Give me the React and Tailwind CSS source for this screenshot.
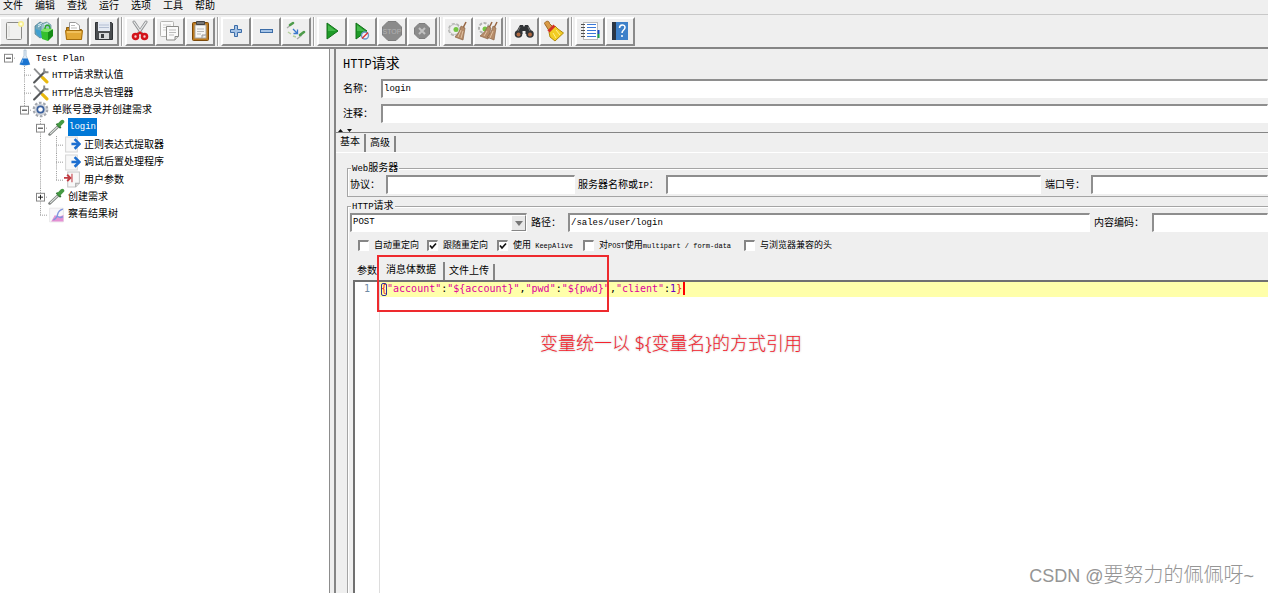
import React, { useState } from "react";

const MONO = "font-['Liberation_Mono','Noto_Sans_CJK_SC',monospace]";

/* Latin runs are set a little smaller than the Chinese glyphs beside them. */
function Mixed({ text, latin = "text-[9px]" }) {
  return text.split(/([\x20-\x7e]+)/).filter(Boolean).map((part, i) =>
    /^[\x20-\x7e]+$/.test(part) ? (
      <span key={i} className={latin}>{part}</span>
    ) : (
      <React.Fragment key={i}>{part}</React.Fragment>
    )
  );
}

/* ---------- toolbar icons (22 x 22) ---------- */
const page = { fill: "#fafafa", stroke: "#8b8b88", strokeWidth: 1 };
const ICONS = {
  new: (
    <>
      <rect x="3.5" y="2.5" width="15" height="17" rx="1" {...page} fill="#f1f1ef" />
      <path d="M6 6v11" stroke="#dcdcda" />
      <circle cx="18" cy="4" r="3" fill="#f7ee8e" />
      <circle cx="18" cy="4" r="1.5" fill="#fffde0" />
    </>
  ),
  templates: (
    <>
      <path d="M2 6l5-4 4 2v12l-4 2-5-4z" fill="#6fa8bd" stroke="#49798c" strokeWidth=".7" />
      <path d="M8 4l6-2 4 3v8H8z" fill="#9cc3cc" stroke="#5d8c98" strokeWidth=".7" />
      <path d="M5 5l4-2M11 5l4-2M5 7l3-2M11 7l4-2" stroke="#e5f4f7" />
      <path d="M2 9l4 1 4 2v7l-6-4z" fill="#3f9fd0" />
      <path d="M8 11l7 1v9l-6-2z" fill="#35c02c" />
      <path d="M15 12l5-3v7l-5 5z" fill="#168c17" />
      <path d="M8 11l3-3 9 1-5 3z" fill="#7ce85e" />
      <path d="M12 9c0-5 5-5 5 0" fill="none" stroke="#2ba527" strokeWidth="1.300" />
    </>
  ),
  open: (
    <>
      <path d="M3.500 19V7.500h5l2 2h8V19z" fill="#c98a1a" stroke="#8f5e0b" />
      <path d="M6.500 12V2.500h6l4 3V12z" fill="#fff" stroke="#999" />
      <path d="M8 5.500h4M8 8h6" stroke="#bbb" />
      <path d="M2.500 10.500h17l-1 9h-15z" fill="#e3a936" stroke="#a76f0d" />
      <path d="M4 12h14" stroke="#ffd986" />
    </>
  ),
  save: (
    <>
      <path d="M2.500 2.500h16l1 1v16h-17z" fill="#4a4d50" stroke="#303336" />
      <rect x="5" y="2" width="12" height="9" fill="#e5eaf3" />
      <path d="M6 5h10M6 7.500h10" stroke="#b4bfd3" />
      <rect x="6" y="13" width="10" height="6" fill="#d5d7d8" />
      <rect x="8" y="14" width="3" height="4" fill="#3b3e41" />
    </>
  ),
  cut: (
    <>
      <path d="M5 2l8 12M17 2L9 14" stroke="#909294" strokeWidth="3" strokeLinecap="round" />
      <path d="M5 2l7 10M17 2l-7 10" stroke="#e8eaea" strokeWidth="1.300" strokeLinecap="round" />
      <ellipse cx="6.500" cy="16.500" rx="2.500" ry="2.500" fill="#f7d0d0" stroke="#d3141b" strokeWidth="2.600" />
      <ellipse cx="15.500" cy="16.500" rx="2.500" ry="2.500" fill="#f7d0d0" stroke="#d3141b" strokeWidth="2.600" />
      <path d="M8.500 14.500l2.500-2 2.500 2" fill="none" stroke="#d3141b" strokeWidth="2.200" />
    </>
  ),
  copy: (
    <>
      <rect x="1.500" y="1.500" width="13" height="15" rx="1" {...page} stroke="#b5b5b3" />
      <path d="M4 5h8M4 7.500h4M4 10h3" stroke="#cfcfcd" />
      <path d="M7.500 6.500h12v10l-3.500 3.500h-8.500z" {...page} />
      <path d="M10 10h7M10 12.500h7M10 15h5" stroke="#bbb" />
      <path d="M16 20v-3.500h3.500" fill="#ddd" stroke="#8b8b88" />
    </>
  ),
  paste: (
    <>
      <rect x="3.500" y="2.500" width="16" height="18" rx="1" fill="#bd7a1d" stroke="#7c4a09" />
      <rect x="6" y="5" width="11" height="13" fill="#f8f8f6" stroke="#a9a9a7" />
      <path d="M8 9h7M8 11.500h7M8 14h4" stroke="#b9b9b7" />
      <path d="M7.500 1.500h8v3h-8z" fill="#777" stroke="#444" />
      <path d="M13 18v-3h4" fill="#ddd" stroke="#999" />
    </>
  ),
  plus: <path d="M9.500 5.500h3v4h4v3h-4v4h-3v-4h-4v-3h4z" fill="#a5c3e6" stroke="#3c6da8" />,
  minus: <rect x="5.500" y="9.500" width="12" height="3" fill="#a5c3e6" stroke="#3c6da8" />,
  toggle: (
    <>
      <path d="M2 8l5-4M12 19l5-4" stroke="#a9ada9" strokeWidth="1.300" />
      <path d="M5 5l3-2M15 15l4-3" stroke="#4e9c4a" strokeWidth="2.600" strokeLinecap="round" />
      <path d="M8 9l4 4M12.500 9.500v4H8.500" stroke="#3a78cc" strokeWidth="1.300" fill="none" />
      <path d="M3 12l3 2M8 16l3 1" stroke="#b4cf9d" strokeWidth="1.500" fill="none" />
    </>
  ),
  start: (
    <>
      <path d="M6 3l11 8-11 8z" fill="#1e9b27" stroke="#127119" />
      <path d="M7 5l8 6H7z" fill="#45b94b" />
    </>
  ),
  startNoPause: (
    <>
      <path d="M5 3l11 8-11 8z" fill="#1e9b27" stroke="#127119" />
      <path d="M6 5l8 6H6z" fill="#45b94b" />
      <circle cx="14" cy="15.500" r="3.500" fill="#f2f5fa" stroke="#7198c9" strokeWidth="1.400" />
      <path d="M11 18.500l6-6" stroke="#dc3535" strokeWidth="1.500" />
    </>
  ),
  stop: (
    <>
      <path d="M7 1.500h8l5.500 5.500v8L15 20.500H7L1.500 15V7z" fill="#8b8b8b" stroke="#7e7e7e" />
      <text x="11" y="14" textAnchor="middle" fontSize="7" fontFamily="Liberation Sans" fill="#b2b2b2">STOP</text>
    </>
  ),
  shutdown: (
    <>
      <path d="M8 3.500h6l4.500 4.500v6L14 18.500H8L3.500 14V8z" fill="#8b8b8b" stroke="#7e7e7e" />
      <path d="M8 8l6 6M14 8l-6 6" stroke="#c2c2c2" strokeWidth="2" />
    </>
  ),
  clear: (
    <>
      <circle cx="7.500" cy="9.500" r="5.500" fill="#f4f4f4" stroke="#b2b3b1" strokeWidth="2" strokeDasharray="3 1.500" />
      <circle cx="7.500" cy="9.500" r="5" fill="#efefef" stroke="#c2c3c1" />
      <circle cx="9" cy="9.500" r="2.500" fill="#75c442" />
      <path d="M19 2l-4 8" stroke="#976642" strokeWidth="1.500" />
      <path d="M14 6l4 2-2 12-8-3c3-3 5-6 6-11z" fill="#b58b68" stroke="#8c6546" strokeWidth=".7" />
      <path d="M14 10l-3 7M16 11l-2 7" stroke="#dfc2a3" />
    </>
  ),
  clearAll: (
    <>
      <circle cx="7" cy="8" r="5" fill="#f4f4f4" stroke="#b2b3b1" strokeWidth="2" strokeDasharray="3 1.500" />
      <circle cx="8" cy="9" r="2.500" fill="#75c442" />
      <path d="M15 2l-3 6M20 2l-3 6" stroke="#976642" strokeWidth="1.500" />
      <path d="M11 6l3 2-3 11-8-3c4-3 6-6 8-10z" fill="#b58b68" stroke="#8c6546" strokeWidth=".7" />
      <path d="M16 6l3 2-2 12-7-3c3-3 5-6 6-11z" fill="#b58b68" stroke="#8c6546" strokeWidth=".7" />
      <path d="M10 11l-3 5M16 11l-3 7" stroke="#dfc2a3" />
    </>
  ),
  search: (
    <>
      <path d="M7 5h3l1 2 1-2h3l5 9H12.500v-3h-3v3H2z" fill="#303335" />
      <circle cx="5.500" cy="14" r="3.800" fill="#333537" />
      <circle cx="17" cy="14" r="3.800" fill="#333537" />
      <circle cx="5.500" cy="14.500" r="2" fill="#b06a42" />
      <circle cx="17" cy="14.500" r="2" fill="#b06a42" />
      <path d="M7 7l-2 4M15 7l2 4" stroke="#777" />
    </>
  ),
  reset: (
    <>
      <path d="M1.500 3.500c1-3 5-3 5 0l4 4-4 4z" fill="#d99b46" stroke="#9e6722" />
      <path d="M6 12l6-6 3 3 5.500 4-8.500 8-5-4z" fill="#f2cd24" stroke="#b18a0b" />
      <path d="M5.500 11.500l6-6" stroke="#d33224" strokeWidth="3" />
      <path d="M10 13l3 5M13 10l4 5" stroke="#fff08a" />
    </>
  ),
  functions: (
    <>
      <rect x="4.500" y="2.500" width="14" height="17" fill="#fff" stroke="#bbb" />
      <path d="M8 4.500h9M8 7.500h9M8 10.500h9M8 13.500h9M8 16.500h9" stroke="#3a78d8" />
      <path d="M2 4.500h4M2 7.500h4M2 10.500h4M2 13.500h4M2 16.500h4" stroke="#505050" />
      <path d="M19.500 10v4" stroke="#1a4fc0" strokeWidth="2" />
      <path d="M19.500 14v4" stroke="#1aa14a" strokeWidth="2" />
    </>
  ),
  help: (
    <>
      <rect x="3" y="2" width="16" height="18" fill="#3d80c9" />
      <rect x="3" y="2" width="4" height="18" fill="#2b3645" />
      <path d="M10.500 8c0-4 5.500-4 5.500-.500 0 2.500-3 2.500-3 5.500M13 15v2" fill="none" stroke="#fff" strokeWidth="1.500" />
    </>
  ),
};

const TOOL_GROUPS = [
  [["new", "新建"], ["templates", "模板"], ["open", "打开"], ["save", "保存"]],
  [["cut", "剪切"], ["copy", "复制"], ["paste", "粘贴"]],
  [["plus", "全部展开"], ["minus", "全部折叠"], ["toggle", "切换"]],
  [["start", "启动"], ["startNoPause", "不停顿开始"], ["stop", "停止"], ["shutdown", "关闭"]],
  [["clear", "清除"], ["clearAll", "清除全部"]],
  [["search", "搜索"], ["reset", "重置搜索"]],
  [["functions", "函数助手对话框"], ["help", "帮助"]],
];

function Toolbar() {
  return (
    <div role="toolbar" className="flex h-[35px] shrink-0 items-center border-t border-[#c8c8c8] border-b-2 border-b-[#858585] bg-[#efefef]">
      {TOOL_GROUPS.map((group, g) => (
        <div key={g} className={g ? "flex items-center" : "-ml-px flex items-center"}>
          {g > 0 && <span className="mx-[2px] h-[29px] w-[2px] border-l border-[#a0a0a0] bg-white" />}
          {group.map(([icon, label]) => (
            <button
              key={icon}
              aria-label={label}
              className="flex h-[29px] w-[30px] items-center justify-center border-2 border-t-white border-r-[#8a8a8a] border-b-[#8a8a8a] border-l-white bg-[#efefef]"
            >
              <svg width="22" height="22" viewBox="0 0 22 22" fill="none" className="shrink-0">{ICONS[icon]}</svg>
            </button>
          ))}
        </div>
      ))}
    </div>
  );
}

/* ---------- tree ---------- */
const TREE_ICONS = {
  flask: (
    <>
      <path d="M7.500 1h2v5l3.500 8.500q-4.500 1.500-9.500 0L7.500 6z" fill="#dce9f5" stroke="#a9bdd0" strokeWidth=".7" />
      <path d="M6 9h5l2.200 5.500q-5 1.500-9.700 0z" fill="#1a74d1" />
      <path d="M6.500 10l-1 3" stroke="#84bbf0" />
    </>
  ),
  tools: (
    <>
      <path d="M2 1.500L13 13" stroke="#8d8f91" strokeWidth="1.700" />
      <path d="M10 10l4 4" stroke="#e9b90e" strokeWidth="3" strokeLinecap="round" />
      <path d="M2 14.500L12 4.500" stroke="#55585a" strokeWidth="2" strokeLinecap="round" />
      <path d="M11.500 1.500v3.500h4" fill="none" stroke="#88898b" strokeWidth="1.800" />
    </>
  ),
  gear: (
    <>
      <circle cx="8" cy="8" r="6.300" stroke="#a3a7ae" strokeWidth="2.200" strokeDasharray="2.500 1.500" />
      <circle cx="8" cy="8" r="5.500" fill="#cfd3d9" />
      <circle cx="8" cy="8" r="3" fill="#fff" stroke="#3a5f9c" strokeWidth="1.600" />
    </>
  ),
  dropper: (
    <>
      <path d="M1.500 14.500L9.500 7" stroke="#7f8381" strokeWidth="2.600" strokeLinecap="round" />
      <path d="M2 14l7-6.500" stroke="#e6ebe7" strokeWidth="1" />
      <path d="M8 4.500l4 4" stroke="#2f6f31" strokeWidth="1.800" />
      <path d="M10.500 5.500L13.500 2.500" stroke="#459a43" strokeWidth="3.600" strokeLinecap="round" />
    </>
  ),
  post: (
    <>
      <path d="M1.500 1h11v14h-11z" fill="#f8f8f8" stroke="#d6d6d6" />
      <path d="M7 7.500h6" stroke="#1d6fd0" strokeWidth="2.400" />
      <path d="M10 3l4.500 4.500L10 12" stroke="#1d6fd0" strokeWidth="2.400" fill="none" />
    </>
  ),
  pre: (
    <>
      <path d="M3.500 1h11v10.500l-3.500 3.500h-7.500z" fill="#f8f8f8" stroke="#c6c6c6" />
      <path d="M11 15v-3.500h3.500" fill="#ddd" stroke="#aaa" />
      <path d="M0 6.500h5M3 3.500l3 3-3 3" stroke="#c23b42" strokeWidth="1.800" fill="none" />
      <path d="M7.500 2.500v8" stroke="#c23b42" />
    </>
  ),
  chart: (
    <>
      <path d="M1.500 2h13v13h-13z" fill="#f8f7fa" stroke="#e2e2e2" strokeWidth=".7" />
      <path d="M3 14.500l3.500-6 3 2 5-2v6z" fill="#e590d3" />
      <path d="M5 13q3-1 4-5t5-5M8 9q3 3 6 1" stroke="#7f95de" strokeWidth="1.300" fill="none" />
    </>
  ),
};

/* guides: ancestor columns, "|" where a line passes through */
const TREE = [
  { guides: "", icon: "flask", text: "Test Plan", toggle: "-", root: true },
  { guides: " ", icon: "tools", text: "HTTP请求默认值" },
  { guides: " ", icon: "tools", text: "HTTP信息头管理器" },
  { guides: " ", icon: "gear", text: "单账号登录并创建需求", toggle: "-", last: true },
  { guides: "  ", icon: "dropper", text: "login", toggle: "-", selected: true },
  { guides: "  |", icon: "post", text: "正则表达式提取器" },
  { guides: "  |", icon: "post", text: "调试后置处理程序" },
  { guides: "  |", icon: "pre", text: "用户参数", last: true },
  { guides: "  ", icon: "dropper", text: "创建需求", toggle: "+" },
  { guides: "  ", icon: "chart", text: "察看结果树", last: true },
];

function Guide({ through, node }) {
  return (
    <svg className="h-full w-4 shrink-0" viewBox="0 0 16 18" preserveAspectRatio="none" fill="none">
      {through && <path d="M8.500 0v18" stroke="#999" strokeDasharray="1 1" />}
      {node && (
        <>
          {!node.root && <path d={node.last ? "M8.500 0v9" : "M8.500 0v18"} stroke="#999" strokeDasharray="1 1" />}
          <path d="M8 9.500h8" stroke="#999" strokeDasharray="1 1" />
          {node.toggle && <rect x="4.500" y="5.500" width="8" height="8" fill="#fff" stroke="#848484" />}
          {node.toggle && <path d="M6 9.500h5" stroke="#222" />}
          {node.toggle === "+" && <path d="M8.500 7v5" stroke="#222" />}
        </>
      )}
    </svg>
  );
}

function Tree() {
  return (
    <ul role="tree" className="grid h-[174px] auto-rows-fr">
      {TREE.map((n, i) => (
        <li key={i} role="treeitem" aria-selected={!!n.selected} className="flex min-h-0 items-center">
          {n.guides.split("").map((g, k) => (
            <Guide key={k} through={g === "|"} />
          ))}
          <Guide node={n} />
          <svg width="17" height="17" viewBox="0 0 16 16" fill="none" className="shrink-0">{TREE_ICONS[n.icon]}</svg>
          <span className={n.selected ? "ml-[3px] bg-[#0078d7] px-px leading-[17px] text-white" : "ml-[3px] pt-[2px] leading-[16px] whitespace-nowrap"}>
            <Mixed text={n.text} />
          </span>
        </li>
      ))}
    </ul>
  );
}

/* ---------- form pieces ---------- */
const FIELD =
  "h-[19px] min-w-0 rounded-none border-t-2 border-l-2 border-r border-b border-t-[#8e8e8e] border-l-[#8e8e8e] border-r-white border-b-white bg-white px-px text-[9px] outline-none";

function Field({ id, label, value = "", labelClass, inputClass }) {
  return (
    <>
      <label htmlFor={id} className={`shrink-0 pt-[2px] whitespace-nowrap ${labelClass}`}>
        <Mixed text={label} />
      </label>
      <input id={id} defaultValue={value} className={`${FIELD} ${inputClass}`} />
    </>
  );
}

function Group({ title, className, children }) {
  return (
    <fieldset className={`min-w-0 border-t border-l border-[#a5a5a5] shadow-[inset_1px_1px_0_white] ${className}`}>
      <legend className="ml-[3px] h-[14px] bg-[#efefef] px-px leading-[16px]">
        <Mixed text={title} />
      </legend>
      {children}
    </fieldset>
  );
}

function Check({ id, label, checked, className }) {
  const [on, setOn] = useState(!!checked);
  return (
    <span className={`flex shrink-0 items-center gap-[5px] ${className}`}>
      <span className="grid">
        <input
          id={id}
          type="checkbox"
          checked={on}
          onChange={() => setOn(!on)}
          className="col-start-1 row-start-1 size-[11px] appearance-none border-t-2 border-l-2 border-r border-b border-t-[#868686] border-l-[#868686] border-r-white border-b-white bg-white"
        />
        {on && (
          <svg width="11" height="11" viewBox="0 0 11 11" className="pointer-events-none col-start-1 row-start-1">
            <path d="M3 5.500l2 2.500 4-4.500" fill="none" stroke="#111" strokeWidth="1.700" />
          </svg>
        )}
      </span>
      <label htmlFor={id} className="pt-px text-[9px] leading-[12px] whitespace-nowrap">
        <Mixed text={label} latin="text-[7px]" />
      </label>
    </span>
  );
}

function Code() {
  return (
    <>
      <span className="relative text-[#f02020]">
        {"{"}
        <span className="absolute top-0 left-0 h-[13px] w-[6px] rounded-[2px] border border-[#333399]" />
      </span>
      <span className="text-[#dc009c]">"account"</span>:<span className="text-[#dc009c]">"${"{account}"}"</span>,
      <span className="text-[#dc009c]">"pwd"</span>:<span className="text-[#dc009c]">"${"{pwd}"}"</span>,
      <span className="text-[#dc009c]">"client"</span>:<span className="text-[#6400c8]">1</span>
      <span className="text-[#f02020]">{"}"}</span>
    </>
  );
}

export default function App() {
  return (
    <div className={`relative flex h-screen flex-col overflow-hidden bg-[#efefef] text-[10px] text-black ${MONO}`}>
      <nav className="flex h-[14px] shrink-0 items-center gap-3 pl-[3px]">
        {["文件", "编辑", "查找", "运行", "选项", "工具", "帮助"].map((m) => (
          <button key={m} className="h-[14px] text-[10px] leading-[12px]">{m}</button>
        ))}
      </nav>
      <Toolbar />

      <div className="flex min-h-0 flex-1">
        <aside className="w-[330px] shrink-0 border-r border-[#8c8c8c] bg-white">
          <Tree />
        </aside>

        <main className="ml-1 flex min-w-0 flex-1 flex-col border-l-2 border-[#858585]">
          <h1 className="pt-[5px] pl-[7px] text-[14px] leading-5">
            <Mixed text="HTTP请求" latin="text-[12px]" />
          </h1>
          <div className="mt-[4px] flex items-center pl-[7px]">
            <Field id="name" label="名称：" value="login" labelClass="w-[38px]" inputClass="flex-1" />
          </div>
          <div className="mt-[6px] flex items-center pl-[7px]">
            <Field id="comment" label="注释：" labelClass="w-[38px]" inputClass="flex-1" />
          </div>

          <div className="mt-[5px] flex h-[5px] shrink-0 items-end border-b border-[#858585] pl-[1px]">
            <svg width="16" height="3" viewBox="0 0 16 3">
              <path d="M1 3l2.500-3L6 3zM10 0h5l-2.500 3z" fill="#111" />
            </svg>
          </div>

          <div role="tablist" className="flex h-[19px] shrink-0 items-end">
            <button role="tab" aria-selected="true" className="h-[18px] border-r-2 border-[#858585] px-1 leading-[16px]">基本</button>
            <button role="tab" aria-selected="false" className="h-[16px] border-r-2 border-[#858585] px-1 leading-[16px]">高级</button>
          </div>

          <div className="flex min-h-0 flex-1 flex-col border-t border-white pt-[8px] pl-[11px]">
            <Group title="Web服务器" className="h-[36px] shrink-0 border-b">
              <div className="flex items-center pl-[2px]">
                <Field id="protocol" label="协议：" labelClass="w-[36px]" inputClass="w-[189px]" />
                <Field id="server" label="服务器名称或IP：" labelClass="ml-[3px] w-[88px]" inputClass="flex-1" />
                <Field id="port" label="端口号：" labelClass="ml-1 w-[46px]" inputClass="w-[177px]" />
              </div>
            </Group>

            <Group title="HTTP请求" className="mt-[2px] flex-1">
              <div className="flex items-center pl-[2px]">
                <div className="grid w-[177px] shrink-0">
                  <select aria-label="方法" className={`${FIELD} col-start-1 row-start-1 w-full appearance-none`}>
                    <option>POST</option>
                    <option>GET</option>
                  </select>
                  <span className="pointer-events-none col-start-1 row-start-1 mt-[2px] mr-px mb-px flex w-[15px] items-center justify-center justify-self-end border border-t-white border-r-[#858585] border-b-[#858585] border-l-white bg-[#e8e8e8]">
                    <svg width="8" height="5" viewBox="0 0 8 5"><path d="M0 0h8L4 5z" fill="#777" /></svg>
                  </span>
                </div>
                <Field id="path" label="路径：" value="/sales/user/login" labelClass="ml-1 w-[37px]" inputClass="flex-1" />
                <Field id="encoding" label="内容编码：" labelClass="ml-1 w-[58px]" inputClass="w-[116px]" />
              </div>

              <div className="mt-[7px] flex h-[13px] items-center pl-[10px]">
                <Check id="auto" label="自动重定向" className="w-[69px]" />
                <Check id="follow" label="跟随重定向" checked className="w-[70px]" />
                <Check id="keep" label="使用 KeepAlive" checked className="w-[86px]" />
                <Check id="multi" label="对POST使用multipart / form-data" className="w-[161px]" />
                <Check id="compat" label="与浏览器兼容的头" />
              </div>

              <div className="relative mt-[9px] ml-[5px]">
                <div role="tablist" className="flex h-[19px] items-end">
                  <button role="tab" aria-selected="false" className="h-[16px] pl-1 leading-[16px]">参数</button>
                  <button role="tab" aria-selected="true" className="h-[18px] border-r-2 border-[#858585] px-[7px] pl-[9px] leading-[16px]">消息体数据</button>
                  <button role="tab" aria-selected="false" className="h-[16px] border-r-2 border-[#858585] px-1 leading-[16px]">文件上传</button>
                </div>
                <div className="flex h-screen border-t-2 border-l-2 border-[#707070] bg-white font-['DejaVu_Sans_Mono',monospace] text-[10px] leading-[13px]">
                  <div className="w-[25px] shrink-0 border-r border-[#dddddd] pr-[9px] text-right text-[#6f8aa5]">1</div>
                  <pre className="flex h-[15px] flex-1 items-start bg-[#ffffaa] pl-px font-['DejaVu_Sans_Mono',monospace]">
                    <code className="border-r-2 border-[#ff0000] pr-px font-['DejaVu_Sans_Mono',monospace] whitespace-nowrap">
                      <Code />
                    </code>
                  </pre>
                </div>
                <div className="pointer-events-none absolute -top-[6px] left-[24px] h-[57px] w-[232px] border-2 border-[#ee2a2e]" />
                <p className="absolute top-[69px] left-[187px] font-['Noto_Sans','Noto_Sans_CJK_SC',sans-serif] text-[18px] leading-[26px] font-light whitespace-nowrap text-[#f5222d] [text-shadow:0_0_2px_#aaa]">
                  {"变量统一以 ${变量名}的方式引用"}
                </p>
              </div>
            </Group>
          </div>
        </main>
      </div>

      <p className="absolute right-[14px] bottom-[4px] font-['Liberation_Sans','Noto_Sans_CJK_SC',sans-serif] text-[20px] leading-[26px] font-light text-[#959595]">
        <Mixed text="CSDN @要努力的佩佩呀~" latin="text-[18px]" />
      </p>
    </div>
  );
}
